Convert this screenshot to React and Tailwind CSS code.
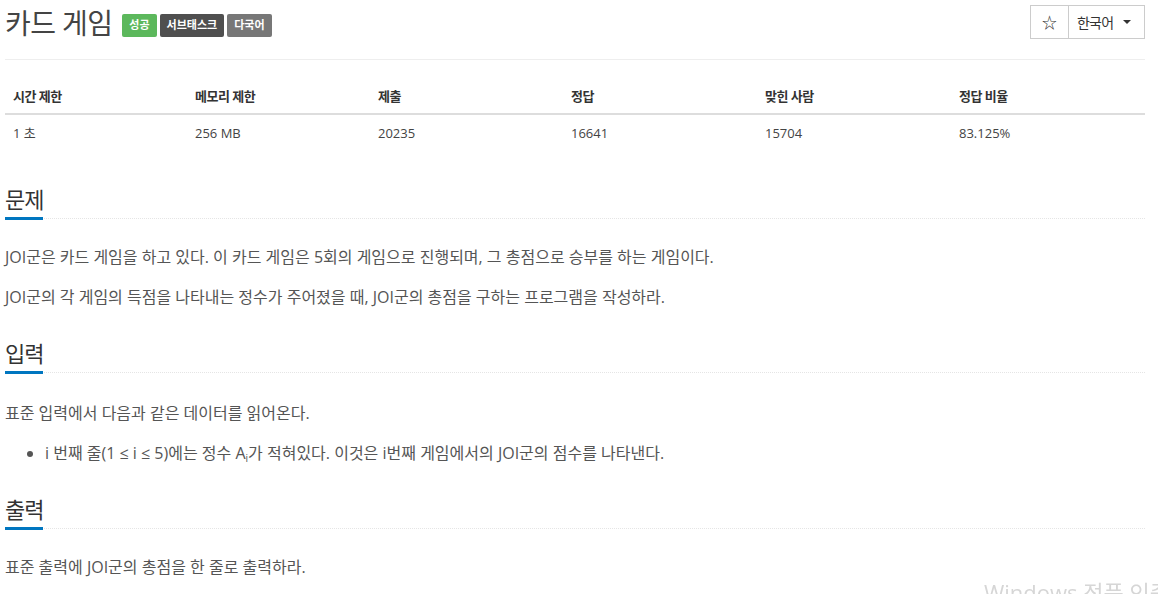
const stats = [
  { label: '시간 제한', value: '1 초', w: 'w-[182px]' },
  { label: '메모리 제한', value: '256 MB', w: 'w-[183px]' },
  { label: '제출', value: '20235', w: 'w-[193px]' },
  { label: '정답', value: '16641', w: 'w-[194px]' },
  { label: '맞힌 사람', value: '15704', w: 'w-[194px]' },
  { label: '정답 비율', value: '83.125%', w: 'flex-1' },
];

function Headline({ children, first }) {
  return (
    <div className={`flex border-b border-dotted border-[#e5e5e5] ${first ? 'mt-[32px]' : 'mt-[26px]'}`}>
      <h2 className="-mb-[2px] border-b-[3px] border-[#0076c0] pb-[3px] text-[22px] leading-[30px] tracking-[-1px] text-[#333] font-normal">
        {children}
      </h2>
    </div>
  );
}

function Text({ children }) {
  return <p className="mb-[10px] text-[16px] leading-[30px] text-[#555]">{children}</p>;
}

export default function App() {
  return (
    <div
      className="relative ml-[5px] w-[1140px] text-[#333]"
      style={{ fontFamily: '"Open Sans", "Noto Sans CJK KR", sans-serif' }}
    >
      {/* Title bar */}
      <div className="flex h-[60px] items-start justify-between border-b border-[#eee]">
        <div className="flex items-center pt-[4px]">
          <h1 className="text-[28px] leading-[38px] tracking-[-0.6px] font-normal text-[#444]">카드 게임</h1>
          <div className="ml-[10px] mt-[4px] flex gap-[3px] text-[11px] font-bold text-white">
            <span className="flex h-[23px] items-center rounded-[2px] bg-[#5cb85c] px-[7px]">성공</span>
            <span className="flex h-[23px] items-center rounded-[2px] bg-[#4f4f4f] px-[7px]">서브태스크</span>
            <span className="flex h-[23px] items-center rounded-[2px] bg-[#777] px-[7px]">다국어</span>
          </div>
        </div>
        <div className="mt-[5px] flex h-[34px] border border-[#ccc] text-[14px] text-[#333]">
          <button className="flex w-[38px] items-center justify-center border-r border-[#ccc] text-[15px]">☆</button>
          <button className="flex w-[75px] items-center gap-[10px] pl-[8px] tracking-[-0.8px]">
            한국어
            <span className="h-0 w-0 border-x-[4px] border-t-[4px] border-x-transparent border-t-[#333]" />
          </button>
        </div>
      </div>

      {/* Stats table */}
      <div className="mt-[21px] text-[13px]">
        <div className="flex h-[34px] items-center border-b-2 border-[#ddd] font-bold tracking-[-0.5px]">
          {stats.map((s) => (
            <div key={s.label} className={`${s.w} px-[8px]`}>{s.label}</div>
          ))}
        </div>
        <div className="flex h-[37px] items-center text-[#444]">
          {stats.map((s) => (
            <div key={s.label} className={`${s.w} px-[8px]`}>{s.value}</div>
          ))}
        </div>
      </div>

      {/* 문제 */}
      <Headline first>문제</Headline>
      <div className="mt-[23px]">
        <Text>JOI군은 카드 게임을 하고 있다. 이 카드 게임은 5회의 게임으로 진행되며, 그 총점으로 승부를 하는 게임이다.</Text>
        <Text>JOI군의 각 게임의 득점을 나타내는 정수가 주어졌을 때, JOI군의 총점을 구하는 프로그램을 작성하라.</Text>
      </div>

      {/* 입력 */}
      <Headline>입력</Headline>
      <div className="mt-[25px]">
        <Text>표준 입력에서 다음과 같은 데이터를 읽어온다.</Text>
        <ul className="mb-[10px] list-disc pl-[40px] text-[16px] leading-[30px] text-[#555]">
          <li>
            i 번째 줄(1 ≤ i ≤ 5)에는 정수 A<sub className="text-[10px]">i</sub>가 적혀있다. 이것은 i번째 게임에서의 JOI군의 점수를 나타낸다.
          </li>
        </ul>
      </div>

      {/* 출력 */}
      <Headline>출력</Headline>
      <div className="mt-[23px]">
        <Text>표준 출력에 JOI군의 총점을 한 줄로 출력하라.</Text>
      </div>

      <div className="fixed left-[984px] top-[576px] text-[22px] text-[#d6d6d6] whitespace-nowrap pointer-events-none">
        Windows 정품 인증
      </div>
    </div>
  );
}
